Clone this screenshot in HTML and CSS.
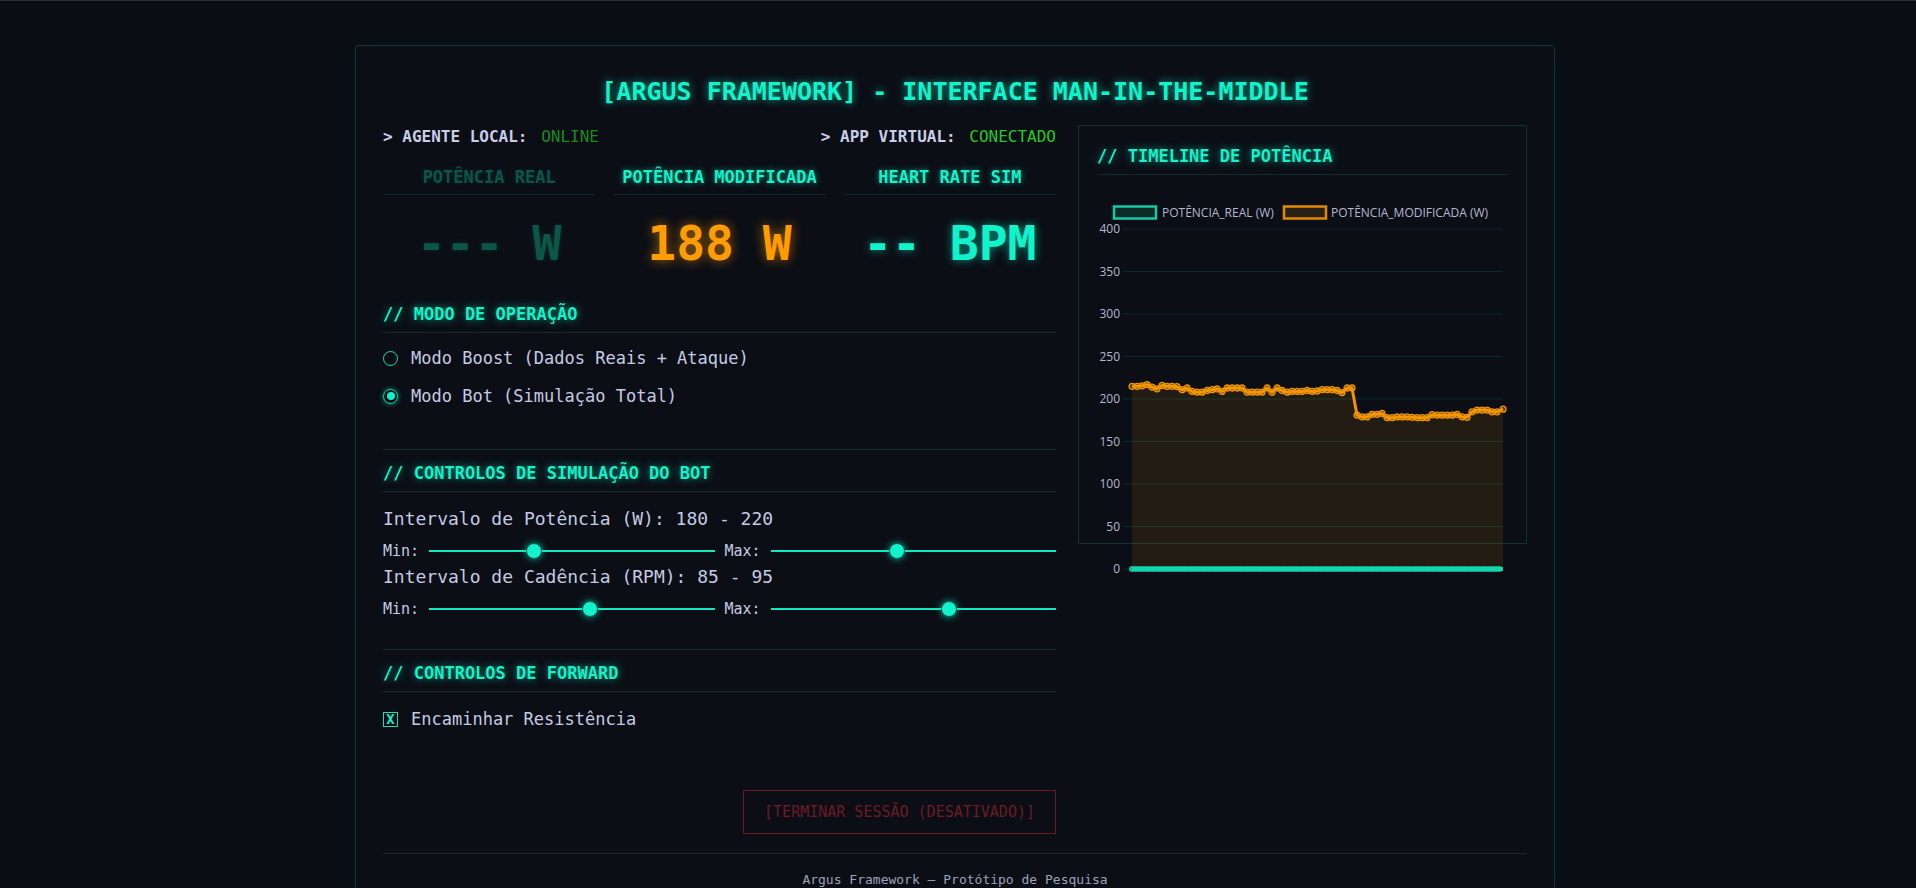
FILE: index.html
```html
<!DOCTYPE html>
<html lang="pt">
<head>
<meta charset="utf-8">
<title>Argus Framework</title>
<link rel="stylesheet" href="styles.css">
</head>
<body>
<div class="page">
  <div class="container">
    <h1 class="title">[ARGUS FRAMEWORK] - INTERFACE MAN-IN-THE-MIDDLE</h1>
    <div class="layout">
      <div class="left">
        <div class="status-row">
          <div class="status"><span class="status-label">&gt; AGENTE LOCAL:</span> <span class="status-val online">ONLINE</span></div>
          <div class="status"><span class="status-label">&gt; APP VIRTUAL:</span> <span class="status-val connected">CONECTADO</span></div>
        </div>

        <div class="stats">
          <div class="stat disabled">
            <div class="stat-label">POTÊNCIA REAL</div>
            <div class="stat-value">--- W</div>
          </div>
          <div class="stat modified">
            <div class="stat-label">POTÊNCIA MODIFICADA</div>
            <div class="stat-value">188 W</div>
          </div>
          <div class="stat hr">
            <div class="stat-label">HEART RATE SIM</div>
            <div class="stat-value">-- BPM</div>
          </div>
        </div>

        <section class="section mode">
          <h2 class="section-title">// MODO DE OPERAÇÃO</h2>
          <div class="options">
            <label class="option"><input type="radio" name="mode" class="radio">Modo Boost (Dados Reais + Ataque)</label>
            <label class="option"><input type="radio" name="mode" class="radio" checked>Modo Bot (Simulação Total)</label>
          </div>
        </section>

        <section class="section bordered sim">
          <h2 class="section-title">// CONTROLOS DE SIMULAÇÃO DO BOT</h2>
          <div class="range-label first">Intervalo de Potência (W): 180 - 220</div>
          <div class="range-row">
            <span class="range-tag">Min:</span>
            <input type="range" class="slider" min="0" max="500" value="180">
            <span class="range-tag">Max:</span>
            <input type="range" class="slider" min="0" max="500" value="220">
          </div>
          <div class="range-label">Intervalo de Cadência (RPM): 85 - 95</div>
          <div class="range-row">
            <span class="range-tag">Min:</span>
            <input type="range" class="slider" min="0" max="150" value="85">
            <span class="range-tag">Max:</span>
            <input type="range" class="slider" min="0" max="150" value="95">
          </div>
        </section>

        <section class="section bordered fwd">
          <h2 class="section-title">// CONTROLOS DE FORWARD</h2>
          <label class="check-row"><span class="checkbox">X</span>Encaminhar Resistência</label>
        </section>

        <div class="actions">
          <button class="btn-stop" disabled>[TERMINAR SESSÃO (DESATIVADO)]</button>
        </div>
      </div>

      <div class="right">
        <div class="chart-panel">
          <h2 class="section-title">// TIMELINE DE POTÊNCIA</h2>
          <svg class="chart" width="411" height="400" viewBox="0 0 411 400">
            <defs>
              <marker id="dotO" markerUnits="userSpaceOnUse" markerWidth="10" markerHeight="10" refX="5" refY="5">
                <circle cx="5" cy="5" r="3" fill="rgba(255,159,0,0.35)" stroke="#f09500" stroke-width="1.3"/>
              </marker>
            </defs>
            <rect x="17" y="25.5" width="42" height="12" fill="#0c2b27" stroke="#17c8a4" stroke-width="2.5"/>
            <text x="65" y="35.8" class="legend">POTÊNCIA_REAL (W)</text>
            <rect x="187" y="25.5" width="42" height="12" fill="#2a2116" stroke="#df8a00" stroke-width="2.5"/>
            <text x="234" y="35.8" class="legend">POTÊNCIA_MODIFICADA (W)</text>

            <g class="grid">
              <line x1="26" y1="48" x2="406" y2="48"/>
              <line x1="26" y1="90.5" x2="406" y2="90.5"/>
              <line x1="26" y1="133" x2="406" y2="133"/>
              <line x1="26" y1="175.5" x2="406" y2="175.5"/>
              <line x1="26" y1="218" x2="406" y2="218"/>
              <line x1="26" y1="260.5" x2="406" y2="260.5"/>
              <line x1="26" y1="303" x2="406" y2="303"/>
              <line x1="26" y1="345.5" x2="406" y2="345.5"/>
              <line x1="26" y1="388" x2="406" y2="388"/>
            </g>
            <g class="axis">
              <text x="23" y="52.3">400</text>
              <text x="23" y="94.8">350</text>
              <text x="23" y="137.3">300</text>
              <text x="23" y="179.8">250</text>
              <text x="23" y="222.3">200</text>
              <text x="23" y="264.8">150</text>
              <text x="23" y="307.3">100</text>
              <text x="23" y="349.8">50</text>
              <text x="23" y="392.3">0</text>
            </g>

            <polygon class="area" points="35,205.3 40,205.3 45,204.8 50,203.6 55,206.1 60,207.8 65,204.4 70,205.3 75,205.3 80,205.7 85,208.7 90,207 95,210.4 100,211.2 105,211.2 110,209.5 115,208.7 120,207.8 125,210.4 130,207 135,207 140,207 145,207 150,211.2 155,211.2 160,211.2 165,211.2 170,207 175,211.2 180,207 185,209.5 190,211.2 195,210.4 200,210.4 205,210.4 210,209.5 215,210.4 220,210 225,208.7 230,208.7 235,208.7 240,209.5 245,211.6 250,207 255,207 260,234.2 265,235.9 270,235.9 275,233.3 280,233.3 285,232.5 290,236.7 295,236.7 300,235.9 305,235.9 310,235.9 315,236.3 320,236.7 325,236.7 330,236.7 335,233.7 340,234.2 345,234.2 350,234.2 355,234.2 360,233.3 365,235.9 370,236.3 375,230.8 380,229.1 385,229.1 390,229.1 395,230.8 400,230.8 406,228.2 406,388 35,388"/>
            <polyline class="line-mod" points="35,205.3 40,205.3 45,204.8 50,203.6 55,206.1 60,207.8 65,204.4 70,205.3 75,205.3 80,205.7 85,208.7 90,207 95,210.4 100,211.2 105,211.2 110,209.5 115,208.7 120,207.8 125,210.4 130,207 135,207 140,207 145,207 150,211.2 155,211.2 160,211.2 165,211.2 170,207 175,211.2 180,207 185,209.5 190,211.2 195,210.4 200,210.4 205,210.4 210,209.5 215,210.4 220,210 225,208.7 230,208.7 235,208.7 240,209.5 245,211.6 250,207 255,207 260,234.2 265,235.9 270,235.9 275,233.3 280,233.3 285,232.5 290,236.7 295,236.7 300,235.9 305,235.9 310,235.9 315,236.3 320,236.7 325,236.7 330,236.7 335,233.7 340,234.2 345,234.2 350,234.2 355,234.2 360,233.3 365,235.9 370,236.3 375,230.8 380,229.1 385,229.1 390,229.1 395,230.8 400,230.8 406,228.2"/>
            <line class="line-real" x1="35" y1="388" x2="406" y2="388"/>
            <line class="line-real-dots" x1="35" y1="388" x2="406" y2="388"/>
          </svg>
        </div>
      </div>
    </div>
    <footer class="footer">Argus Framework — Protótipo de Pesquisa</footer>
  </div>
</div>
</body>
</html>
```

FILE: styles.css
```css
html, body {
  margin: 0;
  padding: 0;
}

body {
  background: #0a0d14;
  border-top: 1px solid #2b2f36;
  font-family: "DejaVu Sans Mono", monospace;
  color: #c5cae4;
}

.page {
  padding: 0 6px 0 0;
}

.container {
  box-sizing: border-box;
  width: 1200px;
  margin: 44px auto 0;
  padding: 27px 27px 10px;
  border: 1px solid #113832;
  border-radius: 4px;
  background: #0b0e15;
  box-shadow: 0 0 30px rgba(0, 240, 200, 0.04);
}

.title {
  margin: 0;
  padding-top: 4px;
  font-size: 25px;
  line-height: 30px;
  font-weight: bold;
  text-align: center;
  color: #12f2cb;
  text-shadow: 0 0 8px rgba(0, 240, 200, 0.7);
}

.layout {
  display: grid;
  grid-template-columns: 3fr 2fr;
  column-gap: 22px;
  margin-top: 18px;
  align-items: start;
}

/* status */
.status-row {
  display: flex;
  justify-content: space-between;
  font-size: 16px;
  line-height: 22px;
  padding-top: 1px;
}

.status-label {
  font-weight: bold;
  color: #c9cde8;
}

.status-val {
  margin-left: 4px;
}

.online {
  color: #1f8a1f;
}

.connected {
  color: #26c926;
}

/* stats */
.stats {
  display: grid;
  grid-template-columns: repeat(3, 1fr);
  column-gap: 18px;
  margin-top: 17px;
}

.stat {
  text-align: center;
}

.stat-label {
  padding: 2px 0 7px;
  font-size: 17px;
  line-height: 20px;
  font-weight: bold;
  color: #12f2cb;
  text-shadow: 0 0 6px rgba(0, 240, 200, 0.6);
  border-bottom: 1px solid #15262a;
}

.stat-value {
  margin-top: 20px;
  font-size: 48px;
  line-height: 56px;
  font-weight: bold;
  color: #12f2cb;
  text-shadow: 0 0 10px rgba(0, 240, 200, 0.6);
}

.stat.disabled .stat-label,
.stat.disabled .stat-value {
  color: #0c5647;
  text-shadow: 0 0 6px rgba(0, 240, 200, 0.12);
}

.stat.modified .stat-value {
  color: #ff9d00;
  text-shadow: 0 0 12px rgba(255, 150, 0, 0.65);
}

/* sections */
.section-title {
  margin: 0;
  padding-bottom: 8px;
  font-size: 17px;
  line-height: 20px;
  font-weight: bold;
  color: #12f2cb;
  text-shadow: 0 0 8px rgba(0, 240, 200, 0.65);
  border-bottom: 1px solid #132b2b;
}

.section.mode {
  margin-top: 33px;
}

.section.bordered {
  border-top: 1px solid #132b2b;
  padding-top: 13px;
}

.section.sim {
  margin-top: 42px;
}

.section.fwd {
  margin-top: 30px;
}

.options {
  display: flex;
  flex-direction: column;
  gap: 16px;
  padding-top: 14px;
}

.option {
  display: flex;
  align-items: center;
  font-size: 17px;
  line-height: 22px;
  color: #c5cae4;
}

.radio {
  appearance: none;
  -webkit-appearance: none;
  box-sizing: border-box;
  width: 15px;
  height: 15px;
  margin: 0 13px 0 0;
  border: 1.5px solid #12e0bb;
  border-radius: 50%;
  background: transparent;
  display: grid;
  place-items: center;
}

.radio:checked {
  box-shadow: 0 0 5px rgba(0, 240, 200, 0.6);
}

.radio:checked::after {
  content: "";
  width: 8px;
  height: 8px;
  border-radius: 50%;
  background: #12f2cb;
}

/* sliders */
.range-label {
  margin-top: 5px;
  font-size: 18px;
  line-height: 22px;
  color: #c5cae4;
}

.range-label.first {
  margin-top: 16px;
}

.range-row {
  display: flex;
  align-items: center;
  gap: 10px;
  height: 20px;
  margin-top: 11px;
}

.range-tag {
  font-size: 15px;
  color: #c5cae4;
}

.slider {
  -webkit-appearance: none;
  appearance: none;
  flex: 1;
  min-width: 0;
  height: 20px;
  margin: 0;
  background: transparent;
}

.slider::-webkit-slider-runnable-track {
  height: 2px;
  background: #12e8c2;
}

.slider::-webkit-slider-thumb {
  -webkit-appearance: none;
  width: 16px;
  height: 16px;
  margin-top: -7px;
  border-radius: 50%;
  background: #12f2cb;
  border: 1px solid #0a5c4d;
  box-sizing: border-box;
  box-shadow: 0 0 7px rgba(0, 240, 200, 0.7);
}

/* checkbox */
.check-row {
  display: flex;
  align-items: center;
  margin-top: 16px;
  font-size: 17px;
  line-height: 22px;
  color: #c5cae4;
}

.checkbox {
  box-sizing: border-box;
  display: flex;
  align-items: center;
  justify-content: center;
  width: 15px;
  height: 15px;
  margin-right: 13px;
  border: 1.5px solid #12e0bb;
  font-size: 14px;
  line-height: 1;
  font-weight: bold;
  color: #12f2cb;
}

/* button */
.actions {
  display: flex;
  justify-content: flex-end;
  margin-top: 60px;
}

.btn-stop {
  height: 44px;
  padding: 0 20px;
  background: transparent;
  border: 1px solid #6a1a21;
  font-family: "DejaVu Sans Mono", monospace;
  font-size: 15px;
  color: #6c1c24;
}

/* chart */
.chart-panel {
  box-sizing: border-box;
  height: 419px;
  padding: 20px 18px 0;
  border: 1px solid #12302c;
}

.chart {
  display: block;
  margin-top: 6px;
  overflow: visible;
}

.legend,
.axis text {
  font-family: "Open Sans", sans-serif;
  font-size: 12px;
  fill: #b3b8d2;
}

.axis text {
  text-anchor: end;
}

.grid line {
  stroke: rgba(0, 240, 200, 0.12);
  stroke-width: 1;
}

.area {
  fill: rgba(255, 159, 0, 0.1);
}

.line-mod {
  fill: none;
  stroke: #f09500;
  stroke-width: 3;
  stroke-linejoin: round;
  marker-start: url(#dotO);
  marker-mid: url(#dotO);
  marker-end: url(#dotO);
}

.line-real {
  stroke: #14cfaa;
  stroke-width: 4;
}

.line-real-dots {
  stroke: rgba(20, 215, 175, 0.85);
  stroke-width: 6;
  stroke-linecap: round;
  stroke-dasharray: 0 3.5;
}

/* footer */
.footer {
  margin-top: 19px;
  padding-top: 18px;
  border-top: 1px solid #132b2b;
  font-size: 13px;
  line-height: 16px;
  text-align: center;
  color: #9da2b8;
}
```
